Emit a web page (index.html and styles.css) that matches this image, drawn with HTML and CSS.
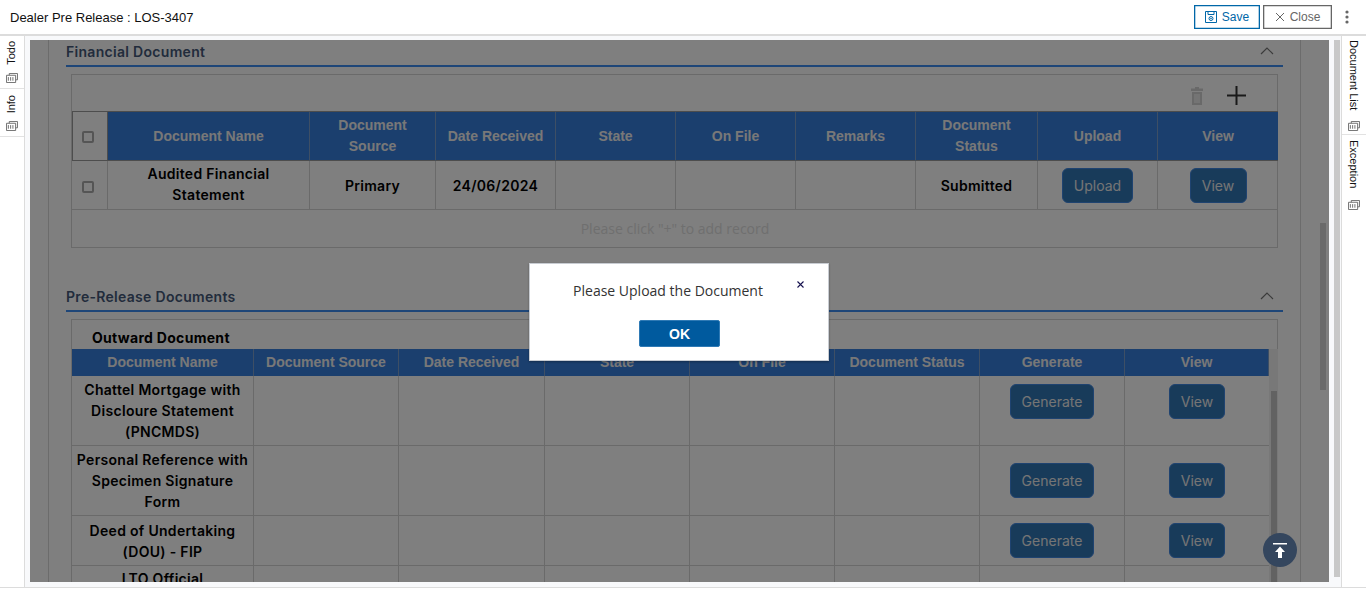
FILE: index.html
```html
<!DOCTYPE html>
<html lang="en">
<head>
<meta charset="utf-8">
<title>Dealer Pre Release</title>
<link rel="stylesheet" href="styles.css">
</head>
<body>
<div class="app">
  <header class="topbar">
    <div class="title">Dealer Pre Release : LOS-3407</div>
    <div class="actions">
      <button class="act act-save">
        <svg class="act-icon" viewBox="0 0 12 12" width="12" height="12"><path d="M.5.5h11v11H.5zM3 .5v3h6v-3M4 7.5a2 2 0 1 0 4 0a2 2 0 1 0-4 0" fill="none" stroke="#0067a8"/><circle cx="6" cy="7.5" r=".8" fill="#0067a8"/></svg>
        Save
      </button>
      <button class="act act-close">
        <svg class="act-icon" viewBox="0 0 10 10" width="10" height="10"><path d="M1 1l8 8M9 1l-8 8" fill="none" stroke="#666" stroke-width="1"/></svg>
        Close
      </button>
      <svg class="more" viewBox="0 0 4 14" width="4" height="14"><circle cx="2" cy="2" r="1.6"/><circle cx="2" cy="7" r="1.6"/><circle cx="2" cy="12" r="1.6"/></svg>
    </div>
  </header>

  <div class="workspace">
    <aside class="rail rail-left">
      <div class="rail-tab tab-todo">
        <span class="rail-label">Todo</span>
        <svg class="rail-icon" viewBox="0 0 13 11"><path d="M3.5 2.5V.5h9v7h-2M.5 2.5h10v8H.5zM2.500 4.500v4M5 4.500v4M7.500 4.500v4" fill="none" stroke="#666"/></svg>
      </div>
      <div class="rail-tab tab-info">
        <span class="rail-label">Info</span>
        <svg class="rail-icon" viewBox="0 0 13 11"><path d="M3.5 2.500V.5h9v7h-2M.5 2.500h10v8H.5zM2.500 4.500v4M5 4.500v4M7.500 4.500v4" fill="none" stroke="#666"/></svg>
      </div>
    </aside>

    <main class="main">
      <div class="canvas">
        <div class="panel">
          <section class="section">
            <div class="section-head">
              <h2>Financial Document</h2>
              <svg class="chevron" viewBox="0 0 14 8" width="14" height="8"><path d="M1 7l6-6 6 6" fill="none" stroke="currentColor" stroke-width="1.200"/></svg>
            </div>
            <div class="box">
              <div class="toolbar">
                <svg class="trash" viewBox="0 0 12 18" width="12" height="18"><path d="M4 0h4v1.500h4V4H0V1.500h4zM1 5h10v13H1zM3.500 7v9h1V7zM5.500 7v9h1V7zM7.500 7v9h1V7z" fill="#d2d2d2" fill-rule="evenodd"/></svg>
                <svg class="plus" viewBox="0 0 19 19" width="19" height="19"><path d="M9.500 0v19M0 9.500h19" stroke="#333" stroke-width="2"/></svg>
              </div>
              <table class="grid grid-fin">
                <colgroup>
                  <col class="c36"><col class="c202"><col class="c126"><col class="c120"><col class="c120"><col class="c120"><col class="c120"><col class="c122"><col class="c120"><col class="c120">
                </colgroup>
                <thead>
                  <tr>
                    <th class="th-check"><span class="check"></span></th>
                    <th>Document Name</th><th>Document Source</th><th>Date Received</th><th>State</th><th>On File</th><th>Remarks</th><th>Document Status</th><th>Upload</th><th>View</th>
                  </tr>
                </thead>
                <tbody>
                  <tr class="row-fin">
                    <td><span class="check"></span></td>
                    <td>Audited Financial Statement</td><td>Primary</td><td>24/06/2024</td><td></td><td></td><td></td><td>Submitted</td>
                    <td><button class="btn btn-upload">Upload</button></td>
                    <td><button class="btn btn-view">View</button></td>
                  </tr>
                  <tr class="row-empty"><td colspan="10">Please click "+" to add record</td></tr>
                </tbody>
              </table>
            </div>
          </section>

          <section class="section section-pre">
            <div class="section-head">
              <h2>Pre-Release Documents</h2>
              <svg class="chevron" viewBox="0 0 14 8" width="14" height="8"><path d="M1 7l6-6 6 6" fill="none" stroke="currentColor" stroke-width="1.200"/></svg>
            </div>
            <div class="box box-pre">
              <div class="box-title">Outward Document</div>
              <table class="grid grid-out">
                <colgroup>
                  <col class="c182"><col class="c145"><col class="c146"><col class="c145"><col class="c145"><col class="c145"><col class="c145"><col class="c144">
                </colgroup>
                <thead>
                  <tr><th>Document Name</th><th>Document Source</th><th>Date Received</th><th>State</th><th>On File</th><th>Document Status</th><th>Generate</th><th>View</th></tr>
                </thead>
                <tbody>
                  <tr class="row-70 row-first">
                    <td>Chattel Mortgage with Discloure Statement (PNCMDS)</td><td></td><td></td><td></td><td></td><td></td>
                    <td class="btn-top"><button class="btn btn-generate">Generate</button></td>
                    <td class="btn-top"><button class="btn btn-view2">View</button></td>
                  </tr>
                  <tr class="row-70">
                    <td>Personal Reference with Specimen Signature Form</td><td></td><td></td><td></td><td></td><td></td>
                    <td><button class="btn btn-generate">Generate</button></td>
                    <td><button class="btn btn-view2">View</button></td>
                  </tr>
                  <tr class="row-50">
                    <td>Deed of Undertaking (DOU) - FIP</td><td></td><td></td><td></td><td></td><td></td>
                    <td><button class="btn btn-generate">Generate</button></td>
                    <td><button class="btn btn-view2">View</button></td>
                  </tr>
                  <tr class="row-70 row-last">
                    <td>LTO Official</td><td></td><td></td><td></td><td></td><td></td><td></td><td></td>
                  </tr>
                </tbody>
              </table>
              <div class="inner-track"><div class="inner-thumb"></div></div>
            </div>
          </section>
        </div>
        <div class="outer-thumb"></div>
        <div class="mask"></div>
        <div class="dialog" role="dialog">
          <svg class="dialog-x" viewBox="0 0 7 7" width="7" height="7"><path d="M.5.500l6 6M6.500.5l-6 6" stroke="#16124f" stroke-width="1.100"/></svg>
          <p class="dialog-msg">Please Upload the Document</p>
          <button class="dialog-ok">OK</button>
        </div>
        <button class="to-top">
          <svg viewBox="0 0 14 15" width="14" height="15"><path d="M0 .75h14" stroke="#fff" stroke-width="1.500"/><path d="M7 3.500l5 5.500H9v6H5V9H2z" fill="#fff"/></svg>
        </button>
      </div>
      <div class="page-scroll"></div>
    </main>

    <aside class="rail rail-right">
      <div class="rail-tab tab-doclist">
        <span class="rail-label">Document List</span>
        <svg class="rail-icon" viewBox="0 0 13 11"><path d="M3.500 2.500V.5h9v7h-2M.5 2.500h10v8H.5zM2.500 4.500v4M5 4.500v4M7.500 4.500v4" fill="none" stroke="#666"/></svg>
      </div>
      <div class="rail-tab tab-exception">
        <span class="rail-label">Exception</span>
        <svg class="rail-icon" viewBox="0 0 13 11"><path d="M3.500 2.500V.5h9v7h-2M.5 2.500h10v8H.5zM2.500 4.500v4M5 4.500v4M7.500 4.500v4" fill="none" stroke="#666"/></svg>
      </div>
    </aside>
  </div>
  <footer class="footer"></footer>
</div>
</body>
</html>
```

FILE: styles.css
```css
* { box-sizing: border-box; }
html, body { margin: 0; height: 100%; overflow: hidden; background: #fff; }
body { font-family: "Liberation Sans", Arial, sans-serif; color: #000; }
button { font-family: inherit; cursor: pointer; }

.app { display: flex; flex-direction: column; height: 100vh; }

/* top bar */
.topbar {
  flex: 0 0 36px; display: flex; align-items: center; justify-content: space-between;
  padding: 0 17px 0 10px; border-bottom: 2px solid #dcdcdc; background: #fff;
}
.title { font-size: 13px; color: #111; }
.actions { display: flex; align-items: center; }
.act {
  height: 24px; display: flex; align-items: center; justify-content: center; gap: 5px;
  background: #fff; font-size: 12px; padding: 0; border-radius: 0;
}
.act-save { width: 66px; border: 1px solid #0067a8; color: #0067a8; box-shadow: inset 0 0 0 .3px #0067a8; }
.act-close { width: 69px; margin-left: 3px; border: 1px solid #666; color: #666; box-shadow: inset 0 0 0 .3px #666; }
.more { margin-left: 13px; fill: #666; }

/* workspace */
.workspace { flex: 1; display: flex; min-height: 0; }
.rail { flex: 0 0 25px; background: #fff; display: flex; flex-direction: column; }
.rail-left { border-right: 1px solid #dcdcdc; }
.rail-right { border-left: 1px solid #dcdcdc; }
.rail-tab { display: flex; flex-direction: column; align-items: center; border-bottom: 1px solid #e2e2e2; }
.rail-label {
  writing-mode: vertical-rl; font-size: 11px; line-height: 12px; color: #111; white-space: nowrap;
}
.rail-icon { width: 12px; height: 10px; flex: none; }
.rail-left .rail-label { transform: rotate(180deg); margin-right: 2px; }
.tab-todo { height: 53px; padding-top: 5px; }
.tab-todo .rail-icon { margin-top: 8px; }
.tab-info { height: 48px; padding-top: 6px; }
.tab-info .rail-icon { margin-top: 8px; }
.tab-doclist { height: 99px; padding-top: 4px; }
.tab-doclist .rail-icon { margin-top: 11px; }
.tab-exception { border-bottom: 0; padding-top: 5px; }
.tab-exception .rail-icon { margin-top: 12px; }

.main { flex: 1; min-width: 0; display: flex; background: #f8f9fb; padding: 4px 1px 5px 5px; }
.canvas { position: relative; width: 1299px; overflow: hidden; background: #fff; }
.page-scroll { width: 6px; margin: 0 0 5px 5px; background: #c8c8c8; }
.footer { flex: 0 0 2px; border-top: 1px solid #dcdcdc; background: #fff; }

/* panel content */
.panel { margin: 0 28px 0 18px; height: 100%; border-left: 1px solid #d8d8d8; border-right: 1px solid #d8d8d8; padding: 1px 17px 0; }
.section-head {
  height: 26px; display: flex; align-items: center; justify-content: space-between;
  border-bottom: 2px solid #3d8cf0; padding: 0 9px 4px 0;
}
.section-head h2 {
  margin: 0; font-family: Inter, sans-serif; font-size: 14px; font-weight: 600; letter-spacing: .3px; color: #445878;
}
.chevron { color: #777; }
.box { margin: 7px 5px 0; border: 1px solid #d4d4d4; }
.toolbar { height: 36px; display: flex; align-items: center; justify-content: flex-end; gap: 24px; padding-right: 31px; }
.trash { margin-top: 5px; }
.plus { margin-top: 4px; }

.grid { border-collapse: separate; border-spacing: 0; table-layout: fixed; }
.grid-fin { width: 1206px; }
.grid-out { width: 1197px; }
.c36 { width: 36px; } .c202 { width: 202px; } .c126 { width: 126px; } .c120 { width: 120px; }
.c122 { width: 122px; } .c182 { width: 182px; } .c145 { width: 145px; } .c146 { width: 146px; } .c144 { width: 144px; }

.grid th {
  background: #367edc; color: #f0f0f0; font-size: 14px; line-height: 21px; font-weight: 700;
  border-right: 1px solid #7d9ecb; padding: 0 8px; text-align: center;
}
.grid-fin th { height: 50px; border-top: 1px solid #9a9a9a; border-bottom: 1px solid #9a9a9a; }
.grid-out th { height: 27px; padding: 0 4px; }
.grid-fin th:last-child { border-right: 0; }
.grid-fin .th-check { background: #fff; border-left: 1px solid #9a9a9a; border-right-color: #9a9a9a; padding: 0 5px 0 0; }
.grid td {
  font-family: Inter, sans-serif; font-size: 14px; font-weight: 600; letter-spacing: .3px; line-height: 21px;
  text-align: center; padding: 3px 4px; border-right: 1px solid #d4d4d4; border-bottom: 1px solid #d4d4d4; color: #000;
}
.grid td:last-child { border-right: 0; }
.row-fin td { height: 49px; padding: 3px 8px; }
.row-fin td:first-child { padding: 0 3px 0 0; }
.row-fin td:nth-child(2) { padding: 2px 8px 4px; }
.row-empty td {
  height: 37px; border: 0; padding: 0; font-family: "Open Sans", sans-serif; font-weight: 400; letter-spacing: 0; color: #dedede;
}
.check { display: inline-block; width: 12px; height: 12px; border: 2px solid #aaa; border-radius: 2px; vertical-align: middle; }

.btn {
  height: 35px; padding: 0; font-size: 14px; color: #eaeaea;
  background: #3076b4; border: 1px solid #3f86e0; border-radius: 6px; vertical-align: middle;
}
.btn-upload { width: 71px; }
.btn-view { width: 57px; }
.btn-generate { width: 84px; }
.btn-view2 { width: 56px; }

.section-pre { margin-top: 38px; }
.box-pre { height: 400px; position: relative; }
.box-title {
  height: 29px; padding: 11px 0 0 20px; font-family: Inter, sans-serif; font-size: 14px; line-height: 14px; font-weight: 700;
  letter-spacing: .3px; color: #000;
}
.row-70 td { height: 70px; }
.row-50 td { height: 50px; }
.btn-top { vertical-align: top; padding-top: 8px !important; }
.row-last td { vertical-align: top; padding-top: 2px; }
.inner-track { position: absolute; left: 1197px; top: 29px; bottom: 0; width: 9px; background: #f0f0f0; padding: 42px 1px 0 2px; }
.inner-thumb { height: 300px; background: #c4c4c4; }
.outer-thumb { position: absolute; left: 1290px; top: 183px; width: 6px; height: 167px; background: #d4d4d4; }

.mask { position: absolute; inset: 0; background: rgba(0,0,0,.5); }
.dialog {
  position: absolute; left: 499px; top: 223px; width: 300px; height: 98px; background: #fff;
  border: 1px solid #c8ccd2; box-shadow: 0 1px 2px rgba(0,0,0,.3); text-align: center;
}
.dialog-x { position: absolute; right: 24px; top: 17px; }
.dialog-msg {
  margin: 18px 0 0; padding-right: 22px; font-family: "Open Sans", sans-serif; font-size: 14px; line-height: 18px; color: #333;
}
.dialog-ok {
  position: absolute; left: 109px; top: 56px; width: 81px; height: 27px; background: #005a9e; color: #fff;
  border: 1px solid #2f7ab5; border-radius: 2px; font-size: 14px; font-weight: 700; padding: 0;
}
.to-top {
  position: absolute; left: 1233px; top: 493px; width: 34px; height: 34px; border-radius: 50%;
  background: #34465e; border: 0; padding: 0; display: flex; align-items: center; justify-content: center;
}
```
